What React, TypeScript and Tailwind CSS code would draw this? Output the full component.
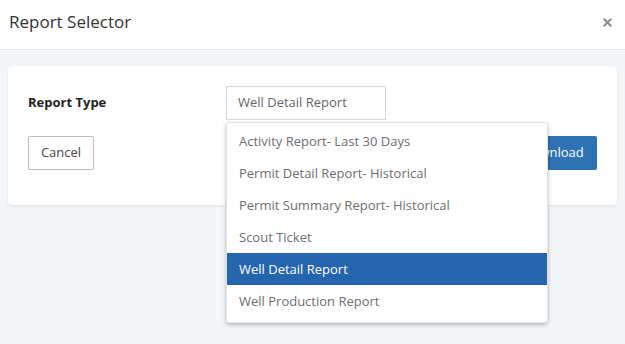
import { X } from 'lucide-react';

const REPORTS = [
  'Activity Report- Last 30 Days',
  'Permit Detail Report- Historical',
  'Permit Summary Report- Historical',
  'Scout Ticket',
  'Well Detail Report',
  'Well Production Report',
];

const SELECTED = 'Well Detail Report';

export default function App() {
  return (
    <div
      className="w-[625px] h-[344px] overflow-hidden bg-[#f3f6f9] text-[#333]"
      style={{ fontFamily: '"Open Sans", "Noto Sans", sans-serif' }}
    >
      {/* Header */}
      <div className="flex items-center justify-between h-[50px] pl-[9px] pr-[11px] bg-white border-b border-[#e3e6ea]">
        <h1 className="text-[17px] leading-none text-[#333] pb-[6px]">Report Selector</h1>
        <X size={13} strokeWidth={3.5} className="text-[#8a8a8a] mb-[5px]" />
      </div>

      {/* Body */}
      <div className="px-[8px] pt-[16px]">
        <div className="relative bg-white rounded-[4px] shadow-[0_1px_3px_rgba(0,0,0,0.08)] h-[139px] px-[20px] pt-[20px]">
          <div className="flex items-center">
            <span className="w-[198px] text-[13px] font-bold text-[#222]">Report Type</span>
            <div className="relative">
              <div className="w-[160px] h-[34px] border border-[#d7d7d7] flex items-center px-[11px] text-[13px] text-[#666]">
                {SELECTED}
              </div>
              {/* Dropdown menu */}
              <ul className="absolute z-10 left-0 top-[36px] w-[322px] bg-white border border-[#e2e2e2] rounded-[3px] shadow-[0_2px_4px_rgba(0,0,0,0.25)] pt-[2px] pb-[5px]">
                {REPORTS.map((r) => (
                  <li
                    key={r}
                    className={
                      r === SELECTED
                        ? 'h-[32px] flex items-center px-[12px] pt-[1px] text-[13px] bg-[#2465ad] text-white'
                        : 'h-[32px] flex items-center px-[12px] pt-[1px] text-[13px] text-[#6e6e6e]'
                    }
                  >
                    {r}
                  </li>
                ))}
              </ul>
            </div>
          </div>

          <div className="flex items-center justify-between mt-[16px]">
            <button className="h-[34px] w-[66px] border border-[#bdbdbd] rounded-[2px] bg-white text-[13px] text-[#444]">
              Cancel
            </button>
            <button className="h-[34px] w-[88px] rounded-[2px] bg-[#2f72b3] text-[13px] text-white">
              Download
            </button>
          </div>
        </div>
      </div>
    </div>
  );
}
